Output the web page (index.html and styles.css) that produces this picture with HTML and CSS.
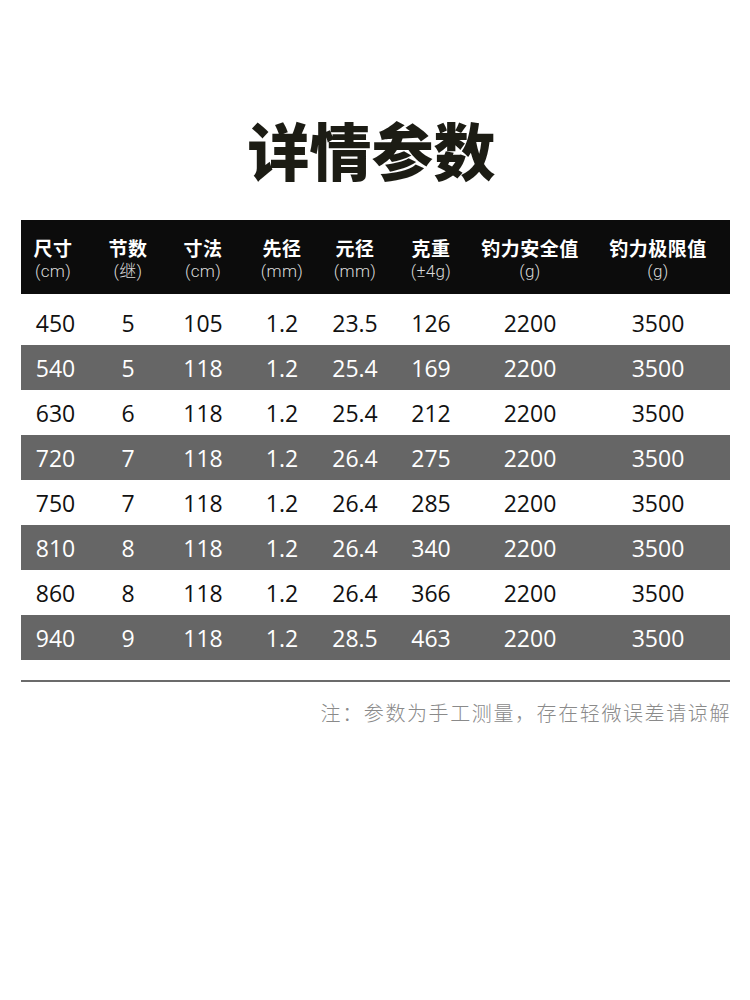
FILE: index.html
```html
<!DOCTYPE html>
<html lang="zh">
<head>
<meta charset="utf-8">
<link rel="stylesheet" href="styles.css">
</head>
<body>
<div class="page">
  <h1 class="title">详情参数</h1>
  <div class="table">
    <div class="row head">
      <div class="cell"><span class="h1">尺寸</span><span class="h2">(cm)</span></div>
      <div class="cell"><span class="h1">节数</span><span class="h2">(继)</span></div>
      <div class="cell"><span class="h1">寸法</span><span class="h2">(cm)</span></div>
      <div class="cell"><span class="h1">先径</span><span class="h2">(mm)</span></div>
      <div class="cell"><span class="h1">元径</span><span class="h2">(mm)</span></div>
      <div class="cell"><span class="h1">克重</span><span class="h2">(±4g)</span></div>
      <div class="cell"><span class="h1">钓力安全值</span><span class="h2">(g)</span></div>
      <div class="cell last"><span class="h1">钓力极限值</span><span class="h2">(g)</span></div>
    </div>
    <div class="row data"><div class="cell first">450</div><div class="cell">5</div><div class="cell">105</div><div class="cell">1.2</div><div class="cell">23.5</div><div class="cell">126</div><div class="cell">2200</div><div class="cell last">3500</div></div>
    <div class="row data alt"><div class="cell first">540</div><div class="cell">5</div><div class="cell">118</div><div class="cell">1.2</div><div class="cell">25.4</div><div class="cell">169</div><div class="cell">2200</div><div class="cell last">3500</div></div>
    <div class="row data"><div class="cell first">630</div><div class="cell">6</div><div class="cell">118</div><div class="cell">1.2</div><div class="cell">25.4</div><div class="cell">212</div><div class="cell">2200</div><div class="cell last">3500</div></div>
    <div class="row data alt"><div class="cell first">720</div><div class="cell">7</div><div class="cell">118</div><div class="cell">1.2</div><div class="cell">26.4</div><div class="cell">275</div><div class="cell">2200</div><div class="cell last">3500</div></div>
    <div class="row data"><div class="cell first">750</div><div class="cell">7</div><div class="cell">118</div><div class="cell">1.2</div><div class="cell">26.4</div><div class="cell">285</div><div class="cell">2200</div><div class="cell last">3500</div></div>
    <div class="row data alt"><div class="cell first">810</div><div class="cell">8</div><div class="cell">118</div><div class="cell">1.2</div><div class="cell">26.4</div><div class="cell">340</div><div class="cell">2200</div><div class="cell last">3500</div></div>
    <div class="row data"><div class="cell first">860</div><div class="cell">8</div><div class="cell">118</div><div class="cell">1.2</div><div class="cell">26.4</div><div class="cell">366</div><div class="cell">2200</div><div class="cell last">3500</div></div>
    <div class="row data alt"><div class="cell first">940</div><div class="cell">9</div><div class="cell">118</div><div class="cell">1.2</div><div class="cell">28.5</div><div class="cell">463</div><div class="cell">2200</div><div class="cell last">3500</div></div>
  </div>
  <div class="rule"></div>
  <p class="note">注：参数为手工测量，存在轻微误差请谅解</p>
</div>
</body>
</html>
```

FILE: styles.css
```css
html, body {
  margin: 0;
  padding: 0;
  background: #ffffff;
}
.page {
  width: 750px;
  height: 1000px;
  padding: 0 20px 0 21px;
  box-sizing: border-box;
  font-family: "Noto Sans CJK SC", "Noto Sans", sans-serif;
}
.title {
  margin: 0;
  padding-top: 116px;
  height: 66px;
  line-height: 66px;
  text-align: center;
  font-size: 62px;
  font-weight: 900;
  color: #1c1c14;
  letter-spacing: 0;
  padding-right: 8px;
}
.table {
  margin-top: 38px;
  width: 709px;
}
.row {
  display: grid;
  grid-template-columns: 64px 86px 64px 94px 52px 100px 98px 151px;
}
.cell {
  text-align: center;
  white-space: nowrap;
}
.cell.last {
  padding-left: 7px;
}
.data .cell.first {
  padding-left: 5px;
}
.head {
  background: #0c0c0c;
  color: #ffffff;
  height: 74px;
  margin-bottom: 6px;
}
.head .cell {
  display: flex;
  flex-direction: column;
  align-items: center;
  justify-content: center;
  padding-top: 2px;
}
.h1 {
  font-size: 19px;
  font-weight: 700;
  line-height: 25px;
  letter-spacing: 0.5px;
}
.h2 {
  font-family: "Roboto", "Noto Sans CJK SC", sans-serif;
  font-size: 17px;
  font-weight: 300;
  line-height: 22px;
  color: #d9d9d9;
  letter-spacing: 0.3px;
}
.data {
  height: 45px;
  align-items: center;
  font-family: "Open Sans", "Noto Sans", sans-serif;
  font-size: 23px;
  color: #111111;
}
.data.alt {
  background: #666666;
  color: #ffffff;
}
.rule {
  margin-top: 20px;
  height: 2px;
  width: 709px;
  background: #6b6b6b;
}
.note {
  margin: 19px 0 0 0;
  text-align: right;
  font-size: 20px;
  line-height: 24px;
  font-weight: 300;
  color: #8a8a8a;
  letter-spacing: 1.6px;
  margin-right: -1px;
}
```
